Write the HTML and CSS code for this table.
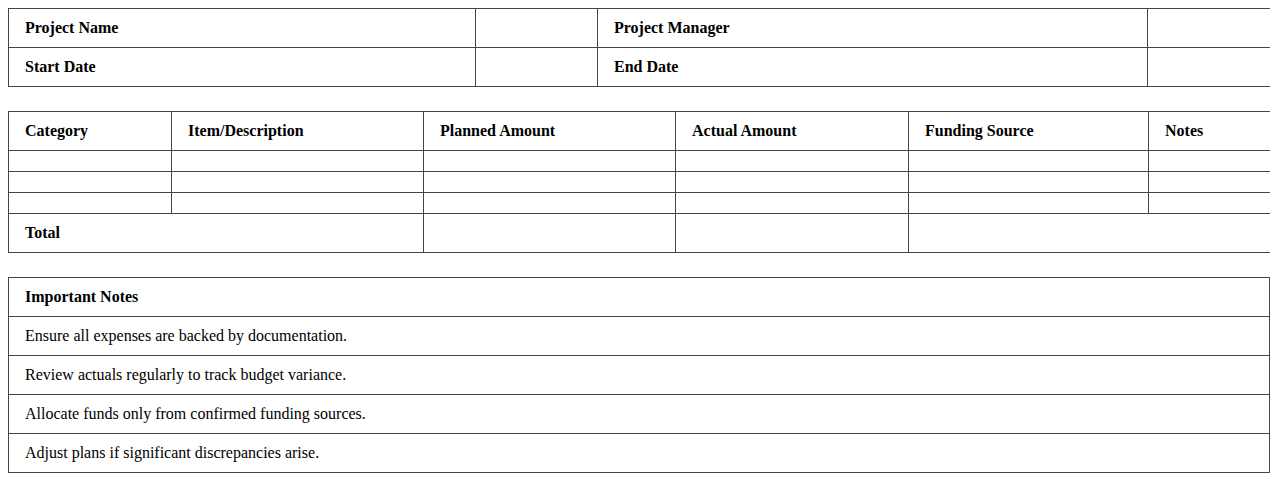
FILE: index.html
```html
<!DOCTYPE html>
<html>
<head>
<meta charset="utf-8">
<link rel="stylesheet" href="styles.css">
</head>
<body>
<table class="grid info">
  <colgroup>
    <col class="c-a"><col class="c-b"><col class="c-c"><col class="c-d">
  </colgroup>
  <tr><th>Project Name</th><td></td><th>Project Manager</th><td></td></tr>
  <tr><th>Start Date</th><td></td><th>End Date</th><td></td></tr>
</table>

<table class="grid budget">
  <colgroup>
    <col class="b1"><col class="b2"><col class="b3"><col class="b4"><col class="b5"><col class="b6">
  </colgroup>
  <tr><th>Category</th><th>Item/Description</th><th>Planned Amount</th><th>Actual Amount</th><th>Funding Source</th><th>Notes</th></tr>
  <tr class="empty"><td></td><td></td><td></td><td></td><td></td><td></td></tr>
  <tr class="empty"><td></td><td></td><td></td><td></td><td></td><td></td></tr>
  <tr class="empty"><td></td><td></td><td></td><td></td><td></td><td></td></tr>
  <tr><th colspan="2">Total</th><td></td><td></td><td colspan="2"></td></tr>
</table>

<table class="grid notes">
  <tr><th>Important Notes</th></tr>
  <tr><td>Ensure all expenses are backed by documentation.</td></tr>
  <tr><td>Review actuals regularly to track budget variance.</td></tr>
  <tr><td>Allocate funds only from confirmed funding sources.</td></tr>
  <tr><td>Adjust plans if significant discrepancies arise.</td></tr>
</table>
</body>
</html>
```

FILE: styles.css
```css
body {
  margin: 8px;
  font-family: "Liberation Serif", "Times New Roman", serif;
  font-size: 16px;
  color: #000;
  background: #fff;
}
.grid {
  width: 100%;
  border-collapse: collapse;
  table-layout: fixed;
  margin-bottom: 24px;
}
.grid th,
.grid td {
  border: 1px solid #444;
  padding: 10px 16px;
  text-align: left;
  line-height: 18px;
}
.grid th { font-weight: bold; }
.grid .empty td { padding: 10px 16px; height: 0; line-height: 0; }
.c-a { width: 467px; }
.c-b { width: 122px; }
.c-c { width: 550px; }
.c-d { width: 123px; }
.b1 { width: 163px; }
.b2 { width: 252px; }
.b3 { width: 252px; }
.b4 { width: 233px; }
.b5 { width: 240px; }
.b6 { width: 122px; }
```
